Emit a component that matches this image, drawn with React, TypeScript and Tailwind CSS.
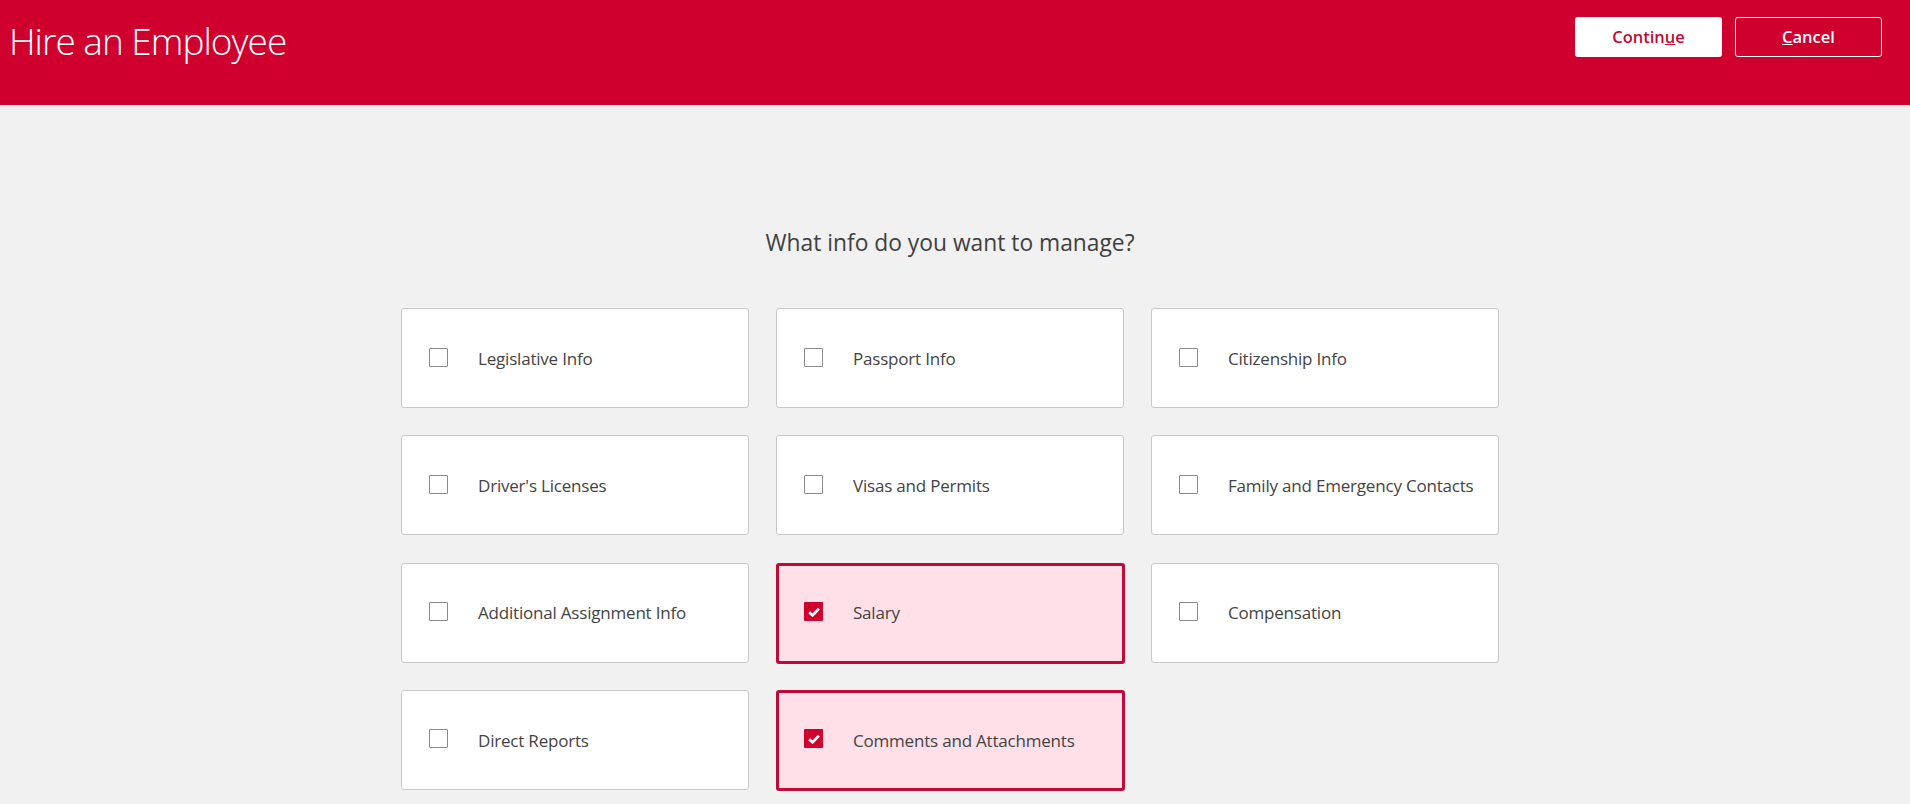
const items: { label: string; checked?: boolean }[] = [
  { label: "Legislative Info" },
  { label: "Passport Info" },
  { label: "Citizenship Info" },
  { label: "Driver's Licenses" },
  { label: "Visas and Permits" },
  { label: "Family and Emergency Contacts" },
  { label: "Additional Assignment Info" },
  { label: "Salary", checked: true },
  { label: "Compensation" },
  { label: "Direct Reports" },
  { label: "Comments and Attachments", checked: true },
];

function Card({ label, checked }: { label: string; checked?: boolean }) {
  return (
    <div
      className={
        checked
          ? "h-[101px] -mb-[1px] -mr-[1px] flex items-center rounded-[3px] border-[3px] border-[#bd0a38] bg-[#ffe0e8] pb-[3px] pl-[25px]"
          : "h-[100px] flex items-center rounded-[3px] border border-[#c8c8c8] bg-white pb-[2px] pl-[27px]"
      }
    >
      {checked ? (
        <span className="flex h-[19px] w-[19px] shrink-0 items-center justify-center rounded-[1px] bg-[#d0002e]">
          <svg viewBox="0 0 14 14" className="h-[16px] w-[16px]" fill="none" stroke="white" strokeWidth="2.4">
            <path d="M2.8 7.2 L5.7 10 L11.3 4.2" />
          </svg>
        </span>
      ) : (
        <span className="h-[19px] w-[19px] shrink-0 rounded-[1px] border border-[#8a8a8a] bg-white" />
      )}
      <span className="ml-[30px] pt-[3px] text-[17px] text-[#444444] tracking-[-0.2px]">{label}</span>
    </div>
  );
}

export default function App() {
  return (
    <div className="h-[804px] overflow-hidden bg-[#f1f1f1] font-['Open_Sans',sans-serif]">
      <header className="flex h-[105px] items-start justify-between bg-[#d0002e] pl-[9px] pr-[28px]">
        <h1 className="pt-[16px] text-[37px] font-light leading-[50px] tracking-[-1px] text-white">Hire an Employee</h1>
        <div className="flex gap-[13px] pt-[17px]">
          <button className="h-[40px] w-[147px] rounded-[3px] bg-white text-[16.5px] font-semibold text-[#c4082f]">
            Contin<span className="underline">u</span>e
          </button>
          <button className="h-[40px] w-[147px] rounded-[3px] border border-white bg-transparent text-[16.5px] font-semibold text-white">
            <span className="underline">C</span>ancel
          </button>
        </div>
      </header>
      <main className="pr-[10px]">
        <h2 className="pt-[123px] text-center text-[22.8px] leading-[29px] text-[#404040]">What info do you want to manage?</h2>
        <div className="mx-auto mt-[51px] grid w-[1098px] grid-cols-3 gap-x-[27px] gap-y-[27.33px]">
          {items.map((it) => (
            <Card key={it.label} {...it} />
          ))}
        </div>
      </main>
    </div>
  );
}
